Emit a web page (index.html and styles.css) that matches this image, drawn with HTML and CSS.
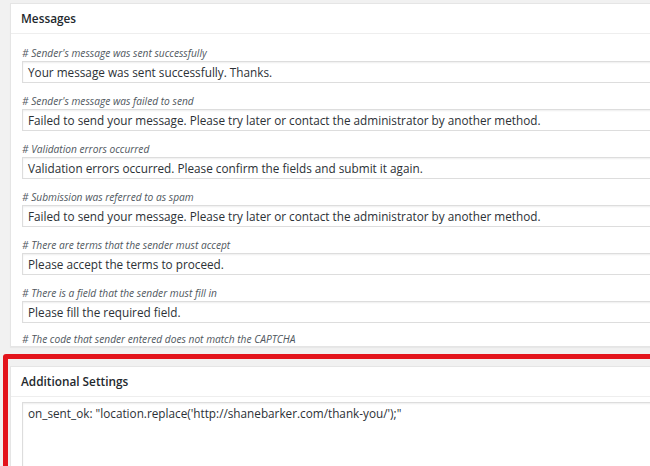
FILE: index.html
```html
<!DOCTYPE html>
<html lang="en">
<head>
<meta charset="utf-8">
<title>Contact form settings</title>
<link rel="stylesheet" href="styles.css">
</head>
<body>
<div class="page">
  <section class="panel">
    <h2 class="panel-title">Messages</h2>
    <div class="panel-body">
      <div class="field">
        <p class="hint"># Sender's message was sent successfully</p>
        <div class="text-input">Your message was sent successfully. Thanks.</div>
      </div>
      <div class="field">
        <p class="hint"># Sender's message was failed to send</p>
        <div class="text-input">Failed to send your message. Please try later or contact the administrator by another method.</div>
      </div>
      <div class="field">
        <p class="hint"># Validation errors occurred</p>
        <div class="text-input">Validation errors occurred. Please confirm the fields and submit it again.</div>
      </div>
      <div class="field">
        <p class="hint"># Submission was referred to as spam</p>
        <div class="text-input">Failed to send your message. Please try later or contact the administrator by another method.</div>
      </div>
      <div class="field">
        <p class="hint"># There are terms that the sender must accept</p>
        <div class="text-input">Please accept the terms to proceed.</div>
      </div>
      <div class="field">
        <p class="hint"># There is a field that the sender must fill in</p>
        <div class="text-input">Please fill the required field.</div>
      </div>
      <p class="hint hint-last"># The code that sender entered does not match the CAPTCHA</p>
    </div>
  </section>

  <div class="highlight">
    <section class="panel">
      <h2 class="panel-title">Additional Settings</h2>
      <div class="panel-body panel-body-tight">
        <div class="text-area">on_sent_ok: "location.replace('http://shanebarker.com/thank-you/');"</div>
      </div>
    </section>
  </div>
</div>
</body>
</html>
```

FILE: styles.css
```css
html, body {
  margin: 0;
  padding: 0;
  height: 100%;
  overflow: hidden;
  background: #f1f1f1;
}

body {
  font-family: "Open Sans", "Liberation Sans", sans-serif;
  color: #2c3136;
  font-size: 11.75px;
}

.page {
  padding: 3px 0 0 10px;
  width: 720px;
}

.panel {
  background: #fff;
  border: 1px solid #e5e5e5;
  box-shadow: 0 1px 1px rgba(0, 0, 0, 0.04);
}

.panel-title {
  margin: 0;
  height: 29px;
  line-height: 29px;
  padding-left: 10px;
  font-size: 11.8px;
  font-weight: 600;
  color: #23282d;
  border-bottom: 1px solid #eeeeee;
}

.panel-body {
  padding: 11px 0 0 11px;
}

.panel-body-tight {
  padding-top: 5px;
}

.field {
  margin-bottom: 10px;
}

.hint {
  margin: 0;
  line-height: 16px;
  font-size: 10.2px;
  font-style: italic;
  color: #50575e;
}

.hint-last {
  line-height: 13px;
}

.text-input {
  box-sizing: border-box;
  height: 22px;
  line-height: 20px;
  padding: 0 5px;
  border: 1px solid #dddddd;
  box-shadow: inset 0 1px 2px rgba(0, 0, 0, 0.07);
  background: #fff;
  white-space: nowrap;
}

.text-area {
  box-sizing: border-box;
  height: 100px;
  line-height: 16px;
  padding: 2px 5px;
  border: 1px solid #dddddd;
  box-shadow: inset 0 1px 2px rgba(0, 0, 0, 0.07);
  background: #fff;
  white-space: nowrap;
}

.highlight {
  margin: 7px 0 0 -7px;
  padding: 7px 0 0 2px;
  border: 5px solid #e3141c;
  border-radius: 3px;
}
```
